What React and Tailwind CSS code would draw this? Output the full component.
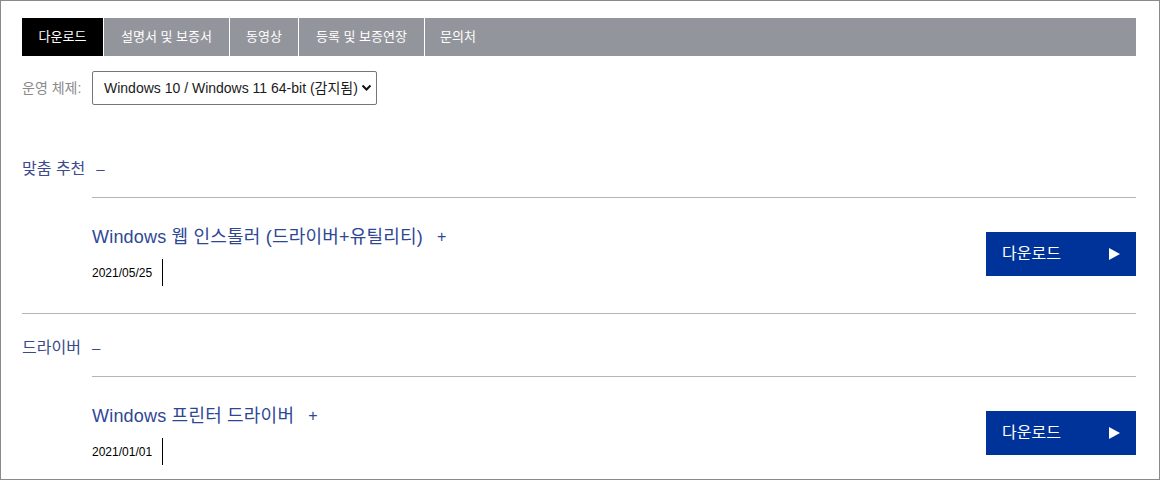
import React from "react";

const font = { fontFamily: '"Liberation Sans", "Noto Sans CJK KR", Arial, sans-serif' };

function Tabs() {
  const tabs = [
    { label: "다운로드", w: "w-[82px] border-r", active: true },
    { label: "설명서 및 보증서", w: "w-[126px] border-r" },
    { label: "동영상", w: "w-[69px] border-r" },
    { label: "등록 및 보증연장", w: "w-[126px] border-r" },
    { label: "문의처", w: "w-[66px]" },
  ];
  return (
    <div className="flex h-[38px] bg-[#93959c]">
      {tabs.map((t, i) => (
        <div
          key={i}
          className={`${t.w} flex items-center justify-center border-white text-[13px] text-white ${
            t.active ? "bg-black" : ""
          }`}
        >
          {t.label}
        </div>
      ))}
    </div>
  );
}

function DownloadButton() {
  return (
    <div className="flex h-[44px] w-[150px] items-center justify-between bg-[#003399] pl-[16px] pr-[16px] text-[16px] text-white">
      <span>다운로드</span>
      <svg width="11" height="12" viewBox="0 0 11 12">
        <polygon points="0,0 11,6 0,12" fill="white" />
      </svg>
    </div>
  );
}

function Item({ title, date }) {
  return (
    <div className="ml-[70px] flex justify-between border-t border-[#b5b5b5] pb-[27px] pt-[27px]">
      <div className="flex flex-col">
        <div className="flex items-center text-[18px] leading-[24px] tracking-[0.2px] text-[#2e4795]">
          <span>{title}</span>
          <span className="ml-[14px] text-[16px]">+</span>
        </div>
        <div className="mt-[10px] flex h-[27px] items-center">
          <span className="text-[12px] text-black">{date}</span>
          <span className="ml-[10px] h-[27px] w-px bg-black" />
        </div>
      </div>
      <div className="mt-[7px]">
        <DownloadButton />
      </div>
    </div>
  );
}

function SectionHeader({ label }) {
  return (
    <div className="flex items-center text-[16px] leading-[20px] text-[#3b4a8c]">
      <span>{label}</span>
      <span className="ml-[11px] text-[15px]">–</span>
    </div>
  );
}

export default function App() {
  return (
    <div
      style={font}
      className="h-[480px] w-[1160px] overflow-hidden border border-[#8a8a8a] bg-white pl-[21px] pr-[23px] pt-[17px]"
    >
      <Tabs />
      <div className="mt-[15px] flex items-center">
        <span className="w-[70px] text-[14px] text-[#8a8a8a]">운영 체제:</span>
        <div className="flex h-[34px] w-[285px] items-center justify-between rounded-[2px] border border-[#767676] pl-[11px] pr-[4px] text-[14px] text-[#1a1a1a]">
          <span>Windows 10 / Windows 11 64-bit (감지됨)</span>
          <svg width="11" height="8" viewBox="0 0 11 8">
            <path d="M1.5 1.5 L5.5 5.5 L9.5 1.5" stroke="#111" strokeWidth="2" fill="none" />
          </svg>
        </div>
      </div>

      <div className="mt-[54px]">
        <div className="pb-[18px]">
          <SectionHeader label="맞춤 추천" />
        </div>
        <Item title="Windows 웹 인스톨러 (드라이버+유틸리티)" date="2021/05/25" />
      </div>

      <div className="border-t border-[#b5b5b5] pt-[24px]">
        <div className="pb-[18px]">
          <SectionHeader label="드라이버" />
        </div>
        <Item title="Windows 프린터 드라이버" date="2021/01/01" />
      </div>
    </div>
  );
}
